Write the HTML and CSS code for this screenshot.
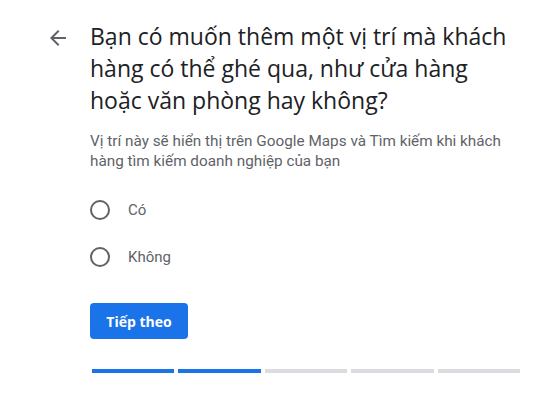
FILE: index.html
```html
<!DOCTYPE html>
<html lang="vi">
<head>
<meta charset="utf-8">
<link rel="stylesheet" href="styles.css">
</head>
<body>
<main class="page">
  <div class="back">
    <svg class="back-icon" viewBox="0 0 24 24" width="24" height="24"><path d="M20 11H7.83l5.59-5.59L12 4l-8 8 8 8 1.41-1.41L7.83 13H20v-2z" fill="#5f6368"/></svg>
  </div>
  <div class="content">
    <h1 class="title">Bạn có muốn thêm một vị trí mà khách hàng có thể ghé qua, như cửa hàng hoặc văn phòng hay không?</h1>
    <p class="subtitle">Vị trí này sẽ hiển thị trên Google Maps và Tìm kiếm khi khách hàng tìm kiếm doanh nghiệp của bạn</p>
    <div class="options">
      <label class="option"><span class="radio"></span><span class="option-label">Có</span></label>
      <label class="option"><span class="radio"></span><span class="option-label">Không</span></label>
    </div>
    <button class="next">Tiếp theo</button>
    <div class="progress">
      <span class="seg done"></span>
      <span class="seg done"></span>
      <span class="seg"></span>
      <span class="seg"></span>
      <span class="seg"></span>
    </div>
  </div>
</main>
</body>
</html>
```
FILE: styles.css
```css
html, body {
  margin: 0;
  padding: 0;
  background: #ffffff;
}
.page {
  display: flex;
  padding: 20px 0 0 46px;
  font-family: Roboto, "Liberation Sans", sans-serif;
}
.back {
  width: 24px;
  height: 24px;
  margin-top: 6px;
  margin-right: 20px;
  flex: none;
}
.back-icon {
  display: block;
}
.content {
  width: 432px;
}
.title {
  margin: 0;
  font-family: "Open Sans", Roboto, sans-serif;
  font-weight: 400;
  font-size: 23px;
  line-height: 32px;
  color: #202124;
}
.subtitle {
  margin: 15px 0 0;
  font-size: 15.3px;
  line-height: 20px;
  color: #5f6368;
}
.options {
  margin-top: 15px;
  display: flex;
  flex-direction: column;
}
.option {
  display: flex;
  align-items: center;
  height: 47px;
}
.radio {
  box-sizing: border-box;
  width: 20px;
  height: 20px;
  border: 2px solid #5f6368;
  border-radius: 50%;
  margin-right: 18px;
}
.option-label {
  font-size: 15px;
  color: #5f6368;
}
.next {
  display: block;
  margin-top: 23px;
  width: 98px;
  height: 36px;
  border: none;
  border-radius: 4px;
  background: #1a73e8;
  color: #ffffff;
  font-family: "Open Sans", Roboto, sans-serif;
  font-weight: 700;
  font-size: 14px;
  padding: 0;
}
.progress {
  margin-top: 30px;
  margin-left: 2px;
  display: flex;
  gap: 4px;
  width: 428px;
}
.seg {
  flex: 1;
  height: 4px;
  background: #dadce0;
}
.seg.done {
  background: #1a73e8;
}
```
